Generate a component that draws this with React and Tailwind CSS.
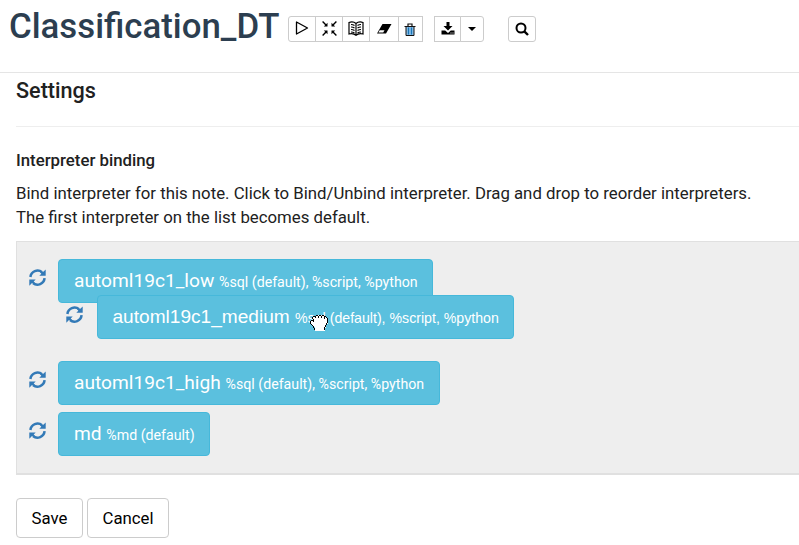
import React from "react";

const Refresh = () => (
  <svg className="block h-[18px] w-[18px] shrink-0" viewBox="0.5 0.4 18 18" fill="none" stroke="#337ab7" strokeWidth="2.5">
    <path d="M1.9 8.400A7.200 7.200 0 0 1 13.600 3.600" />
    <path d="M16.100 9.600A7.200 7.200 0 0 1 4.400 14.400" />
    <path d="M17.200 .8V7.200H10.800L12.800 5.200 11.500 3.500H14.500Z" fill="#337ab7" stroke="none" />
    <path d="M.8 17.200V10.800H7.200L5.200 12.800 6.500 14.500H3.500Z" fill="#337ab7" stroke="none" />
  </svg>
);

const Interp = ({ name, detail }) => (
  <div className="flex h-[51px] items-start">
    <div className="mr-[11px] pt-[10px]"><Refresh /></div>
    <Pill name={name} detail={detail} className="pl-[15px] text-[19.15px]" detailClass="text-[14.2px]" />
  </div>
);

const Pill = ({ name, detail, className, detailClass }) => (
  <div className={"h-11 whitespace-nowrap rounded border border-[#46b8da] bg-[#5bc0de] pr-[14.5px] pt-[7px] leading-7 text-white " + className}>
    {name} <span className={detailClass}>{detail}</span>
  </div>
);

const Tool = ({ className, children }) => (
  <button className={"flex h-[26px] items-center justify-center border border-[#ccc] bg-white text-black " + className}>{children}</button>
);

const HAND = [
  "......##.##.##....",
  "...###..#..#..##..",
  "..#..#..#..#..#.#.",
  "..#...........#..#",
  "...#.............#",
  ".###.............#",
  "#..#.............#",
  "#................#",
  "#...............#.",
  ".#..............#.",
  "..#............#..",
  "...#...........#..",
  "...#..........#...",
  "....#.........#...",
  "....#.........#...",
];

const Hand = () => (
  <svg className="absolute left-[310px] top-[315px] h-4 w-5" viewBox="0 0 20 16" shapeRendering="crispEdges">
    <path d="M4 1h11l3 3v4l-2 3-1 5H5v-3L1 8V6l3-1-1-3Z" fill="#fff" />
    {HAND.flatMap((row, y) =>
      [...row].map((c, x) => (c === "#" ? <rect key={x + "-" + y} x={x} y={y} width="1" height="1" fill="#000" /> : null))
    )}
  </svg>
);

export default function App() {
  return (
    <div className="relative h-[545px] w-[799px] overflow-hidden bg-white font-[Roboto,sans-serif] text-[#212121]">
      <header className="flex h-[73px] items-start border-b border-[#e5e5e5] pl-[9px]">
        <h1 className="w-[279px] shrink-0 whitespace-nowrap pt-[5px] text-[34.800px] font-medium leading-[42px] text-[#2c3e50]">Classification_DT</h1>
        <div className="flex pt-4">
          <Tool className="w-7 rounded-l-[3px] pb-[2px]">
            <svg width="14" height="14" viewBox="0 0 14 14" fill="none" stroke="currentColor" strokeWidth="1.3"><path d="M1.500 1v12L12.500 7Z" strokeLinejoin="round" /></svg>
          </Tool>
          <Tool className="-ml-px w-7 pb-[2px]">
            <svg width="15" height="15" viewBox="0 0 15 15" stroke="currentColor" strokeWidth="1.4"><path d="M.6 .6L4 4M14.400 .6L11 4M.6 14.400L4 11M14.400 14.400L11 11" fill="none" /><path d="M5.500 1.800V5.500H1.800ZM9.500 1.800V5.500H13.200ZM5.500 13.200V9.500H1.800ZM9.500 13.200V9.500H13.200Z" fill="currentColor" stroke="none" /></svg>
          </Tool>
          <Tool className="-ml-px w-7 pb-[2px]">
            <svg width="16" height="15" viewBox="0 0 16 15" fill="none" stroke="currentColor" strokeWidth="1.200"><path d="M8 2.500C6 .8 3 .8 1 1.500v11.500c2.500-.7 5-.4 7 1.300 2-1.700 4.500-2 7-1.300V1.500c-2-.7-5-.7-7 1ZM8 2.500V14M3 3.500c1.300 0 2.500.3 3.500 1M3 6c1.300 0 2.500.3 3.500 1M3 8.500c1.300 0 2.500.3 3.500 1M13 3.500c-1.300 0-2.500.3-3.500 1M13 6c-1.300 0-2.500.3-3.500 1M13 8.500c-1.300 0-2.500.3-3.500 1M3 11c1.300 0 2.500.3 3.500 1M13 11c-1.300 0-2.500.3-3.500 1" /></svg>
          </Tool>
          <Tool className="-ml-px w-[30px]">
            <svg width="16" height="12" viewBox="0 0 16 12"><path d="M6.500 1H15.500L10 10.500H1Z" fill="currentColor" /><path d="M3.700 7.200H8.500L7.200 9.500H2.400Z" fill="#fff" /></svg>
          </Tool>
          <Tool className="-ml-px w-[25px] pr-[2px]">
            <svg width="12" height="13" viewBox="0 0 12 13" fill="none"><path d="M2 3.500h8v9H2Z" fill="#8dc0e8" stroke="#111" /><path d="M4.500 4.500v7M7.500 4.500v7" stroke="#1976b8" strokeWidth="1.300" /><path d="M.5 3.500h11M4 3V1h4v2" stroke="#111" strokeWidth="1.200" /></svg>
          </Tool>
          <Tool className="ml-[11px] w-[27px] pb-[2px]">
            <svg width="14" height="13" viewBox="0 0 14 13" fill="currentColor"><path d="M5.500 0h3v4h3L7 8.500 2.500 4h3Z" /><path d="M.5 8.500h3.700L7 11l2.800-2.500h3.700V12.500H.5Z" /><path d="M9.500 10.500h1v1h-1zM11.500 10.500h1v1h-1z" fill="#fff" /></svg>
          </Tool>
          <Tool className="-ml-px w-6 rounded-r-[3px]">
            <svg width="8" height="4" viewBox="0 0 8 4"><path d="M0 0h8L4 4Z" /></svg>
          </Tool>
          <Tool className="ml-6 w-7 rounded-[3px]">
            <svg width="14" height="14" viewBox="0 0 14 14" fill="none" stroke="currentColor" strokeWidth="2"><circle cx="6" cy="6" r="4.500" /><path d="M9.300 9.300L13 13" strokeWidth="2.400" /></svg>
          </Tool>
        </div>
      </header>
      <main className="pl-4">
        <h2 className="pt-[5px] text-[21.600px] font-medium leading-[26px]">Settings</h2>
        <hr className="mt-[22px] border-[#eee]" />
        <h3 className="mt-[22px] text-[16.800px] font-medium leading-[22px]">Interpreter binding</h3>
        <p className="mt-[10px] whitespace-nowrap text-[16.800px] leading-6">
          Bind interpreter for this note. Click to Bind/Unbind interpreter. Drag and drop to reorder interpreters.
          <br />
          The first interpreter on the list becomes default.
        </p>
        <section className="mt-3 h-[234px] border-b-2 border-l border-t border-[#e0e0e0] bg-[#eee] pl-3 pt-[17px]">
          <Interp name="automl19c1_low" detail="%sql (default), %script, %python" />
          <div className="h-[51px]" />
          <Interp name="automl19c1_high" detail="%sql (default), %script, %python" />
          <Interp name="md" detail="%md (default)" />
        </section>
        <div className="mt-[23px] flex gap-1 text-[16.800px] text-black">
          <button className="h-10 w-[67px] rounded border border-[#ccc] pt-[2px]">Save</button>
          <button className="h-10 w-[82px] rounded border border-[#ccc] pt-[2px]">Cancel</button>
        </div>
      </main>
      <div className="absolute left-[66px] top-[295px] flex items-start font-['Liberation_Sans',Arial,sans-serif]">
        <div className="mr-[13px] pt-[11px]"><Refresh /></div>
        <Pill name="automl19c1_medium" detail="%sql (default), %script, %python" className="pl-[14.5px] text-[19.1px]" detailClass="text-[14.16px]" />
      </div>
      <Hand />
    </div>
  );
}
